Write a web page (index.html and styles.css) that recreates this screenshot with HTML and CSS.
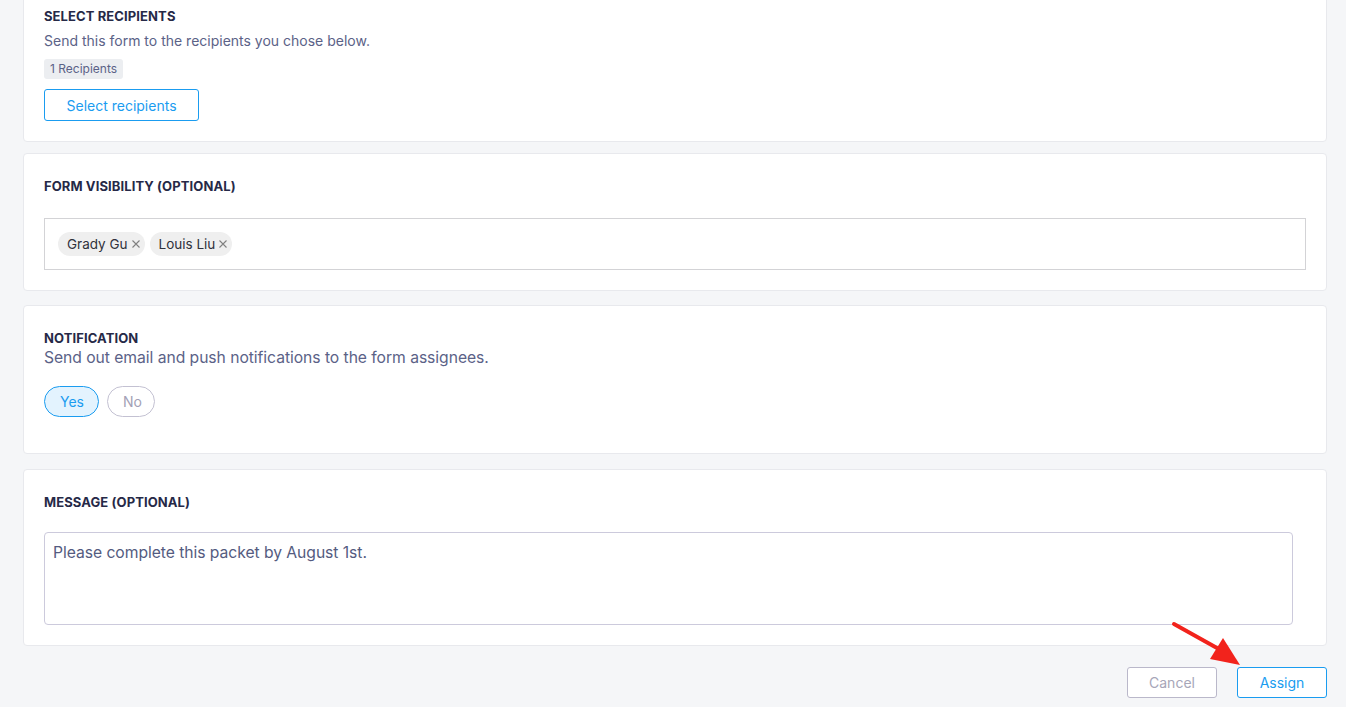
FILE: index.html
```html
<!DOCTYPE html>
<html lang="en">
<head>
    <meta charset="UTF-8">
    <title>Assign Form</title>
    <link rel="stylesheet" href="styles.css">
</head>
<body>
    <div class="page">
        <div class="card card-recipients">
            <h4 class="card-title">Select Recipients</h4>
            <p class="card-desc">Send this form to the recipients you chose below.</p>
            <span class="badge">1 Recipients</span>
            <div>
                <button type="button" class="btn btn-outline btn-select">Select recipients</button>
            </div>
        </div>

        <div class="card card-visibility">
            <h4 class="card-title">Form Visibility (Optional)</h4>
            <div class="tag-input">
                <span class="chip">Grady Gu
                    <svg class="chip-x" width="8" height="8" viewBox="0 0 8 8"><path d="M0.5 0.5L7.5 7.5M7.5 0.5L0.5 7.5" stroke="#808080" stroke-width="1.1"/></svg>
                </span>
                <span class="chip">Louis Liu
                    <svg class="chip-x" width="8" height="8" viewBox="0 0 8 8"><path d="M0.5 0.5L7.5 7.5M7.5 0.5L0.5 7.5" stroke="#808080" stroke-width="1.1"/></svg>
                </span>
            </div>
        </div>

        <div class="card card-notify">
            <h4 class="card-title">Notification</h4>
            <p class="card-desc big">Send out email and push notifications to the form assignees.</p>
            <div class="pills">
                <button type="button" class="pill pill-on">Yes</button>
                <button type="button" class="pill">No</button>
            </div>
        </div>

        <div class="card card-message">
            <h4 class="card-title">Message (Optional)</h4>
            <div class="message-box">Please complete this packet by August 1st.</div>
        </div>

        <div class="footer">
            <button type="button" class="btn btn-cancel">Cancel</button>
            <button type="button" class="btn btn-outline btn-assign">Assign</button>
        </div>
    </div>

    <!-- red annotation arrow pointing at Assign -->
    <svg class="arrow" width="80" height="50" viewBox="0 0 80 50">
        <line x1="3" y1="3" x2="46" y2="27" stroke="#f2231c" stroke-width="4" stroke-linecap="round"/>
        <polygon points="52,17 39,38 69,44" fill="#f2231c"/>
    </svg>
</body>
</html>
```

FILE: styles.css
```css
body {
    margin: 0;
    background: #f5f6f8;
    font-family: Inter, "Noto Sans", sans-serif;
    color: #262947;
}
.page {
    margin-top: -17px;
    padding: 0 19px 0 23px;
}
.card {
    background: #fff;
    border: 1px solid #e8e9ed;
    border-radius: 4px;
    padding: 24px 20px 20px 20px;
}
.card-title {
    margin: 0;
    font-size: 13px;
    line-height: 16px;
    font-weight: 700;
    text-transform: uppercase;
    color: #262947;
    letter-spacing: 0.1px;
}
.card-desc {
    margin: 7px 0 0 0;
    font-size: 14px;
    line-height: 20px;
    color: #5b6287;
}
.card-desc.big {
    margin-top: 2px;
    font-size: 15.7px;
    letter-spacing: -0.05px;
}
.badge {
    display: inline-block;
    margin-top: 8px;
    padding: 0 6px;
    height: 20px;
    line-height: 20px;
    font-size: 12px;
    color: #5b6287;
    background: #eceef1;
    border-radius: 3px;
}
.btn {
    font-family: inherit;
    font-size: 14px;
    background: #fff;
    border-radius: 3px;
    cursor: pointer;
}
.btn-outline {
    border: 1px solid #1a9cf0;
    color: #1a9cf0;
}
.btn-select {
    margin-top: 10px;
    width: 155px;
    height: 32px;
}
.card-recipients {
    margin-bottom: 11px;
}
.card-visibility {
    margin-bottom: 14px;
}
.tag-input {
    margin-top: 24px;
    height: 50px;
    border: 1px solid #d3d3d6;
    display: flex;
    align-items: center;
    gap: 5px;
    padding: 0 13px;
}
.chip {
    display: inline-flex;
    align-items: center;
    height: 24px;
    padding: 0 5px 0 9px;
    background: #efefef;
    border-radius: 12px;
    font-size: 13.5px;
    color: #30323c;
}
.chip-x {
    margin-left: 4px;
}
.card-notify {
    margin-bottom: 15px;
    padding-bottom: 36px;
}
.pills {
    margin-top: 18px;
    display: flex;
    gap: 8px;
}
.pill {
    height: 31px;
    padding: 0 15px;
    border-radius: 16px;
    font-family: inherit;
    font-size: 14px;
    border: 1px solid #c3c1d2;
    background: #fff;
    color: #a3a1b6;
}
.pill-on {
    width: 55px;
    border-color: #1a9cf0;
    background: #e3f3fe;
    color: #1a9cf0;
}
.pill:not(.pill-on) {
    width: 48px;
}
.message-box {
    margin: 22px 13px 0 0;
    height: 93px;
    box-sizing: border-box;
    border: 1px solid #cccadc;
    border-radius: 4px;
    padding: 10px 8px;
    font-size: 15.7px;
    letter-spacing: -0.05px;
    line-height: 20px;
    color: #545b80;
}
.footer {
    display: flex;
    justify-content: flex-end;
    gap: 20px;
    margin-top: 21px;
}
.btn-cancel {
    width: 90px;
    height: 31px;
    border: 1px solid #bab8ca;
    color: #a7a6b8;
}
.btn-assign {
    width: 90px;
    height: 31px;
}
.arrow {
    position: absolute;
    left: 1171px;
    top: 621px;
}
```
